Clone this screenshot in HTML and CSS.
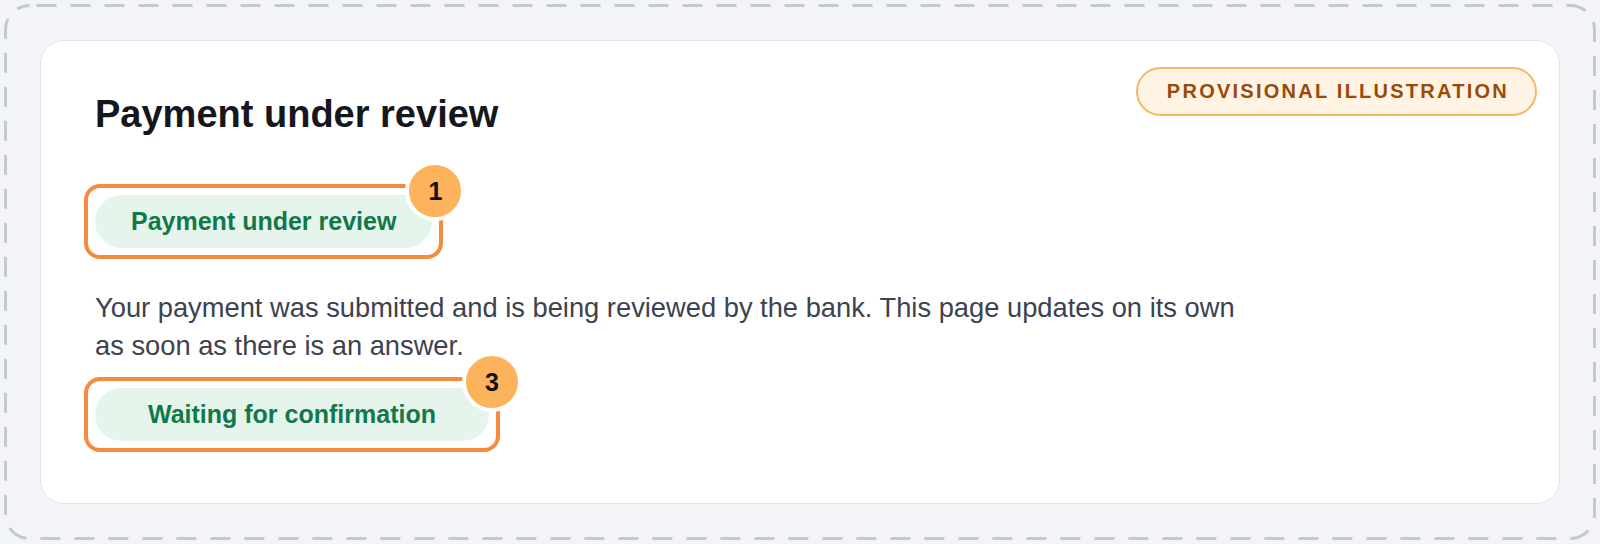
FILE: index.html
```html
<!DOCTYPE html>
<html lang="en">
<head>
<meta charset="utf-8">
<title>Payment under review</title>
<link rel="stylesheet" href="styles.css">
</head>
<body>
  <div class="frame">
    <svg class="frame-dash" width="1592" height="536" aria-hidden="true">
      <rect x="1.5" y="1.5" width="1589" height="533" rx="24" ry="24" fill="none" stroke="#c3c8d3" stroke-width="3" stroke-dasharray="20 14" stroke-dashoffset="27"/>
    </svg>
    <section class="card">
      <span class="tag">Provisional illustration</span>
      <h1 class="title">Payment under review</h1>
      <div class="marked marked-status">
        <span class="pill pill-status">Payment under review</span>
        <span class="ring"></span>
        <span class="marker">1</span>
      </div>
      <p class="desc">Your payment was submitted and is being reviewed by the bank. This page updates on its own as soon as there is an answer.</p>
      <div class="marked marked-wait">
        <span class="pill pill-wait">Waiting for confirmation</span>
        <span class="ring"></span>
        <span class="marker">3</span>
      </div>
    </section>
  </div>
</body>
</html>
```
FILE: styles.css
```css
html, body {
  margin: 0;
  height: 100%;
}

body {
  background: #f2f4f7;
  font-family: "Liberation Sans", Arial, sans-serif;
  padding: 4px;
  box-sizing: border-box;
  display: flex;
}

.frame {
  position: relative;
  flex: 1;
  display: flex;
  padding: 36px;
}

.frame-dash {
  position: absolute;
  left: 0;
  top: 0;
  pointer-events: none;
}

.card {
  flex: 1;
  position: relative;
  background: #ffffff;
  border: 1px solid #e0e3e9;
  border-radius: 24px;
  padding: 50px 54px;
  display: flex;
  flex-direction: column;
  align-items: flex-start;
}

.tag {
  position: absolute;
  top: 26px;
  right: 22px;
  font-size: 20px;
  line-height: 23px;
  font-weight: 700;
  letter-spacing: 2.25px;
  text-transform: uppercase;
  color: #9a4a07;
  background: #fff3e4;
  border: 2px solid #f2b866;
  border-radius: 999px;
  padding: 11px 26px 11px 29px;
}

.title {
  margin: 0;
  font-size: 38px;
  line-height: 46px;
  font-weight: 700;
  color: #15171c;
}

.marked {
  position: relative;
  margin-top: 58px;
}

.pill {
  display: block;
  font-size: 25px;
  line-height: 29px;
  font-weight: 700;
  padding: 12px 36px;
  border-radius: 999px;
  background: #e5f5ec;
  color: #12784a;
  white-space: nowrap;
}

.pill-wait {
  padding: 12px 53px;
}

.ring {
  position: absolute;
  inset: -11px;
  border: 4px solid #f68b40;
  border-radius: 16px;
}

.marker {
  position: absolute;
  top: -34px;
  right: -33px;
  width: 52px;
  height: 52px;
  border: 4px solid #ffffff;
  border-radius: 50%;
  background: #fdb35c;
  color: #111111;
  font-size: 25px;
  font-weight: 700;
  display: flex;
  align-items: center;
  justify-content: center;
}

.desc {
  margin: 41px 0 0;
  font-size: 27.3px;
  line-height: 38px;
  color: #3d4250;
  max-width: 1152px;
}

.marked-wait {
  margin-top: 23px;
}

.marked-wait .marker {
  top: -36px;
}
```
